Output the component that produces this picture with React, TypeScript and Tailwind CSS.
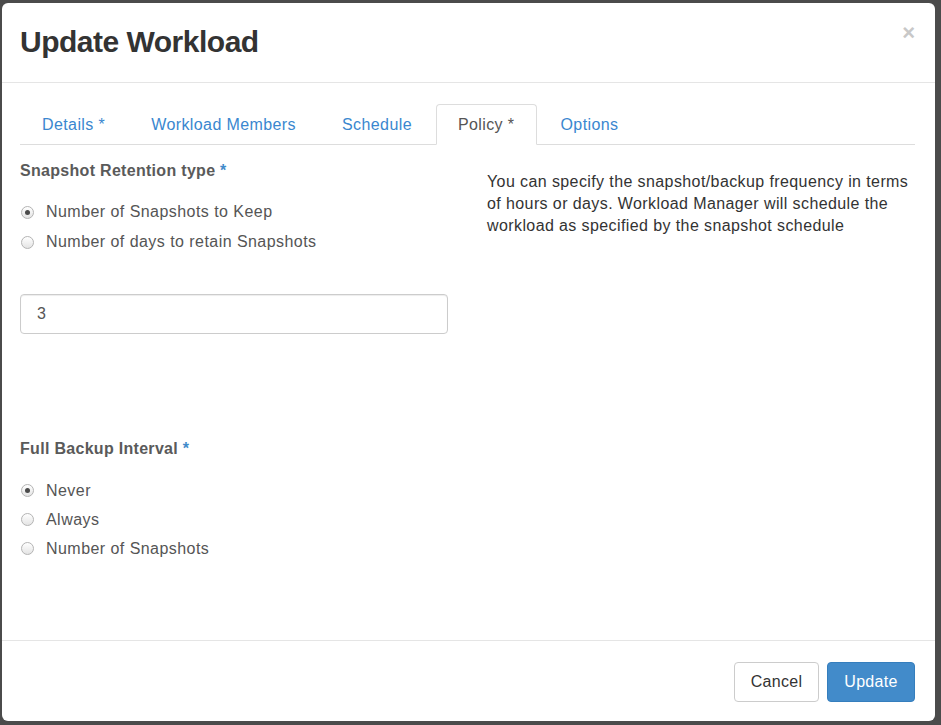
import React from 'react';

const tabs = [
  { label: 'Details *', active: false },
  { label: 'Workload Members', active: false },
  { label: 'Schedule', active: false },
  { label: 'Policy *', active: true },
  { label: 'Options', active: false },
];

const Radio: React.FC<{ checked?: boolean; label: string; rowClass: string }> = ({ checked, label, rowClass }) => (
  <div className={`flex items-center ${rowClass}`}>
    <span className="ml-[1px] mr-[12px] flex h-[13px] w-[13px] items-center justify-center rounded-full border border-[#b4b4b4] bg-gradient-to-b from-[#ffffff] to-[#e4e4e4]">
      {checked && <span className="h-[5px] w-[5px] rounded-full bg-[#4a4a4a]"></span>}
    </span>
    <span className="text-[16px] tracking-[0.45px] text-[#555555]">{label}</span>
  </div>
);

const FieldLabel: React.FC<{ text: string }> = ({ text }) => (
  <div className="text-[16px] font-bold leading-[22px] tracking-[0.3px] text-[#5a5a5a]">
    {text} <span className="text-[#428bca]">*</span>
  </div>
);

export default function App() {
  return (
    <div className="flex h-[725px] w-[941px] bg-[#4b4b4b] pl-[2px] pt-[3px] font-['Liberation_Sans',Arial,sans-serif]">
      {/* Modal */}
      <div className="flex h-[718px] w-[933px] flex-col rounded-[6px] bg-white">
        {/* Header */}
        <div className="flex items-start justify-between border-b border-[#e5e5e5] pb-[22px] pl-[18px] pr-[20px] pt-[21px]">
          <h1 className="text-[30px] font-bold leading-[36px] tracking-[-0.5px] text-[#333333]">Update Workload</h1>
          <span className="mt-[-2px] text-[22px] font-bold leading-[22px] text-[#c8c8c8]">×</span>
        </div>

        {/* Body */}
        <div className="flex-1 pl-[18px] pr-[20px] pt-[21px]">
          <div className="flex border-b border-[#dddddd]">
            {tabs.map((t) => (
              <div
                key={t.label}
                className={`-mb-px mr-[2px] flex h-[41px] items-center rounded-t-[4px] border px-[21px] text-[16px] tracking-[0.4px] ${
                  t.active
                    ? 'border-[#dddddd] border-b-white bg-white text-[#555555]'
                    : 'border-transparent text-[#3a87cf]'
                }`}
              >
                {t.label}
              </div>
            ))}
          </div>

          <div className="mt-[15px] flex">
            <div className="w-[428px]">
              <FieldLabel text="Snapshot Retention type" />
              <div className="mt-[15px]">
                <Radio checked label="Number of Snapshots to Keep" rowClass="h-[30px]" />
                <Radio label="Number of days to retain Snapshots" rowClass="h-[30px]" />
              </div>
              <div className="mt-[37px] flex h-[40px] items-center rounded-[4px] border border-[#cccccc] px-[16px] text-[16px] text-[#555555] shadow-[inset_0_1px_1px_rgba(0,0,0,0.075)]">
                3
              </div>
              <div className="mt-[104px]">
                <FieldLabel text="Full Backup Interval" />
              </div>
              <div className="mt-[16px]">
                <Radio checked label="Never" rowClass="h-[29px]" />
                <Radio label="Always" rowClass="h-[29px]" />
                <Radio label="Number of Snapshots" rowClass="h-[29px]" />
              </div>
            </div>
            <div className="ml-[39px] w-[428px] pt-[11px] text-[16px] leading-[22px] tracking-[0.4px] text-[#333333]">
              You can specify the snapshot/backup frequency in terms of hours or days. Workload Manager will schedule the
              workload as specified by the snapshot schedule
            </div>
          </div>
        </div>

        {/* Footer */}
        <div className="flex justify-end gap-[8px] border-t border-[#e5e5e5] pb-[19px] pr-[20px] pt-[21px]">
          <button className="h-[40px] w-[85px] rounded-[4px] border border-[#cccccc] bg-white text-[16px] tracking-[0.3px] text-[#333333]">
            Cancel
          </button>
          <button className="h-[40px] w-[88px] rounded-[4px] border border-[#357ebd] bg-[#428bca] text-[16px] tracking-[0.3px] text-white">
            Update
          </button>
        </div>
      </div>
    </div>
  );
}
